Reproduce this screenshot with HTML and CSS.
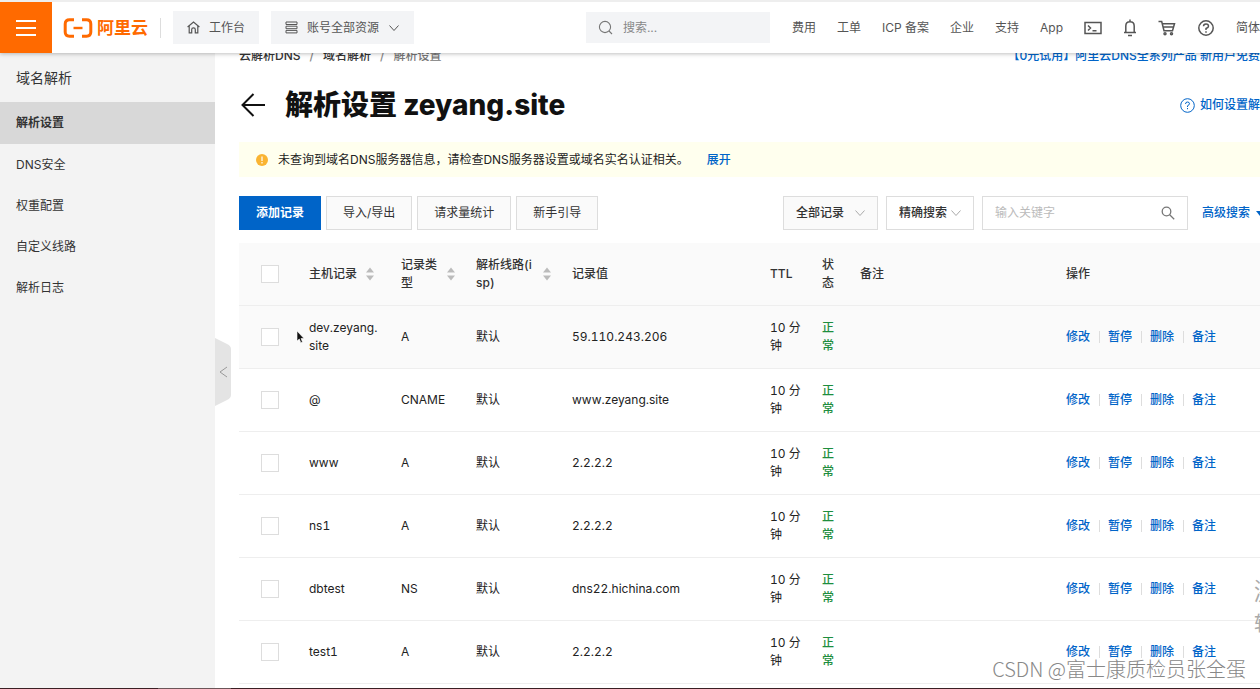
FILE: index.html
```
<!doctype html>
<html lang="zh-CN">
<head>
    <meta charset="UTF-8">
    <meta name="viewport" content="width=device-width, initial-scale=1.0">
    <title>解析设置 zeyang.site</title>
    <link rel="stylesheet" href="styles.css">
</head>
<body>
<svg class="defs" aria-hidden="true">
    <symbol id="sort" viewBox="0 0 10 14">
        <path d="M5 0.5 9 5.5H1zM5 13.5 9 8.5H1z" fill="#bbb"/>
    </symbol>
    <symbol id="down" viewBox="0 0 12 12">
        <path d="M1.5 3.5 6 8.5l4.5-5" fill="none" stroke="currentColor"/>
    </symbol>
</svg>

<header class="topbar">
    <button class="menu-btn" aria-label="菜单">
        <svg width="22" height="18" viewBox="0 0 22 18"><path d="M1 2h20M1 9h20M1 16h20" stroke="#fff" stroke-width="2"/></svg>
    </button>
    <a class="logo" href="#">
        <svg width="30" height="20" viewBox="0 0 30 20">
            <path d="M11 1.8H6.5Q2.2 1.8 2.2 6v8q0 4.2 4.3 4.2H11M19 1.8h4.5q4.3 0 4.3 4.2v8q0 4.2-4.3 4.2H19" fill="none" stroke="#ff6a00" stroke-width="3"/>
            <path d="M10.5 10h9" stroke="#ff6a00" stroke-width="2.4"/>
        </svg>
        <span>阿里云</span>
    </a>
    <button class="top-btn">
        <svg width="13" height="13" viewBox="0 0 13 13" fill="none" stroke="currentColor" stroke-width="1.2"><path d="M.6 6 6.5 1l5.9 5M2.2 5v6.8h2.5V8.5q0-1.6 1.8-1.6t1.8 1.6v3.3h2.5V5"/></svg>
        工作台
    </button>
    <button class="top-btn">
        <svg width="13" height="13" viewBox="0 0 13 13" fill="none" stroke="currentColor"><path d="M1 1h11v2.5H1zM1 5.2h11v2.5H1zM1 9.4h11v2.5H1z"/></svg>
        账号全部资源
        <svg class="caret" width="12" height="12"><use href="#down"/></svg>
    </button>
    <label class="top-search">
        <svg width="15" height="15" viewBox="0 0 15 15" fill="none" stroke="#777" stroke-width="1.1"><circle cx="7" cy="7" r="5.6"/><path d="m11 11 3 3"/></svg>
        <input type="text" placeholder="搜索..." aria-label="搜索">
    </label>
    <nav class="top-nav">
        <a href="#">费用</a>
        <a href="#">工单</a>
        <a href="#">ICP 备案</a>
        <a href="#">企业</a>
        <a href="#">支持</a>
        <a href="#">App</a>
        <a href="#" aria-label="终端"><svg width="18" height="14" viewBox="0 0 18 14" fill="none" stroke="currentColor" stroke-width="1.5"><path d="M1 1.5h16v11H1zM4 4.5 6.5 7 4 9.5M8.5 9.8h4"/></svg></a>
        <a href="#" aria-label="消息"><svg width="14" height="18" viewBox="0 0 14 18" fill="none" stroke="currentColor" stroke-width="1.5"><path d="M7 .5v2M1 13.5h12M2.8 13.5V7q0-4.2 4.2-4.2T11.2 7v6.5M5 16.5h4"/></svg></a>
        <a href="#" aria-label="购物车"><svg width="18" height="16" viewBox="0 0 18 16" fill="none" stroke="currentColor" stroke-width="1.5"><path d="M.5 1.5h3.2l2.3 9.3h8.5l2-7H4.5M5.3 7h10"/><circle cx="7" cy="13.8" r="1"/><circle cx="13.5" cy="13.8" r="1"/></svg></a>
        <a href="#" aria-label="帮助"><svg width="18" height="18" viewBox="0 0 18 18" fill="none" stroke="currentColor" stroke-width="1.5"><circle cx="9" cy="9" r="7.2"/><path d="M6.5 7.3Q6.5 5 9 5t2.5 2.2Q11.5 8.5 9 9.5V11M9 12.2v1.5"/></svg></a>
        <a href="#">简体</a>
    </nav>
</header>

<div class="layout">
    <aside class="sidebar">
        <h2>域名解析</h2>
        <ul>
            <li class="active"><a href="#">解析设置</a></li>
            <li><a href="#">DNS安全</a></li>
            <li><a href="#">权重配置</a></li>
            <li><a href="#">自定义线路</a></li>
            <li><a href="#">解析日志</a></li>
        </ul>
        <button class="fold" aria-label="收起">
            <svg width="16" height="68" viewBox="0 0 16 68"><path d="M0 0 12 6q4 2 4 5v46q0 3-4 5L0 68z" fill="#e4e4e4"/><path d="m12 29-7 5 7 5" fill="none" stroke="#999"/></svg>
        </button>
    </aside>

    <main class="main">
        <div class="crumb">
            <a href="#">云解析DNS</a><i>/</i><a href="#">域名解析</a><i>/</i><span>解析设置</span>
            <a class="link promo" href="#">【0元试用】阿里云DNS全系列产品 新用户免费</a>
        </div>
        <div class="title">
            <a href="#" aria-label="返回"><svg width="26" height="24" viewBox="0 0 26 24" fill="none" stroke="#111" stroke-width="2"><path d="M26 12H4M14.5 1 3.500 12l11 11"/></svg></a>
            <h1>解析设置 zeyang.site</h1>
            <a class="link help" href="#">
                <svg width="15" height="15" viewBox="0 0 15 15" fill="none" stroke="currentColor"><circle cx="7.5" cy="7.5" r="6.8"/><path d="M5.5 6q0-2 2-2t2 1.8q0 1-2 2V9M7.5 10v1.2"/></svg>
                如何设置解
            </a>
        </div>
        <div class="notice">
            <svg width="12" height="12" viewBox="0 0 12 12"><circle cx="6" cy="6" r="6" fill="#fab432"/><path d="M6 2.5v4.5M6 8v1.5" stroke="#fff" stroke-width="1.2"/></svg>
            <span>未查询到域名DNS服务器信息，请检查DNS服务器设置或域名实名认证相关。</span>
            <a class="link" href="#">展开</a>
        </div>
        <div class="toolbar">
            <button class="btn primary">添加记录</button>
            <button class="btn">导入/导出</button>
            <button class="btn">请求量统计</button>
            <button class="btn">新手引导</button>
            <div class="filter">
                <div class="select gray">
                    <select aria-label="记录范围"><option>全部记录</option></select>
                    <svg width="12" height="12"><use href="#down"/></svg>
                </div>
                <div class="select">
                    <select aria-label="搜索方式"><option>精确搜索</option></select>
                    <svg width="12" height="12"><use href="#down"/></svg>
                </div>
                <label class="keyword">
                    <input type="text" placeholder="输入关键字" aria-label="关键字">
                    <svg width="14" height="14" viewBox="0 0 14 14" fill="none" stroke="#777" stroke-width="1.3"><circle cx="5.5" cy="5.5" r="4.3"/><path d="m8.7 8.7 4.5 4.5"/></svg>
                </label>
                <a class="link more" href="#">高级搜索 <svg width="4" height="5" viewBox="0 0 4 5"><path d="M0 0h8L4 5z" fill="currentColor"/></svg></a>
            </div>
        </div>

        <table class="records">
            <colgroup>
                <col class="c-check"><col class="c-host"><col class="c-type"><col class="c-isp"><col class="c-value">
                <col class="c-ttl"><col class="c-status"><col class="c-remark"><col>
            </colgroup>
            <thead>
            <tr>
                <th class="check"><input type="checkbox" aria-label="全选"></th>
                <th><div class="sort">主机记录<button aria-label="排序"><svg width="10" height="14"><use href="#sort"/></svg></button></div></th>
                <th><div class="sort">记录类型<button aria-label="排序"><svg width="10" height="14"><use href="#sort"/></svg></button></div></th>
                <th><div class="sort">解析线路(isp)<button aria-label="排序"><svg width="10" height="14"><use href="#sort"/></svg></button></div></th>
                <th>记录值</th>
                <th>TTL</th>
                <th>状态</th>
                <th>备注</th>
                <th>操作</th>
            </tr>
            </thead>
            <tbody>
            <tr class="hover">
                <td class="check"><input type="checkbox" aria-label="dev.zeyang.site"></td>
                <td>dev.zeyang.site</td><td>A</td><td>默认</td><td>59.110.243.206</td><td>10 分钟</td><td class="ok">正常</td><td></td>
                <td><div class="ops"><a href="#">修改</a><a href="#">暂停</a><a href="#">删除</a><a href="#">备注</a></div></td>
            </tr>
            <tr>
                <td class="check"><input type="checkbox" aria-label="@"></td>
                <td>@</td><td>CNAME</td><td>默认</td><td>www.zeyang.site</td><td>10 分钟</td><td class="ok">正常</td><td></td>
                <td><div class="ops"><a href="#">修改</a><a href="#">暂停</a><a href="#">删除</a><a href="#">备注</a></div></td>
            </tr>
            <tr>
                <td class="check"><input type="checkbox" aria-label="www"></td>
                <td>www</td><td>A</td><td>默认</td><td>2.2.2.2</td><td>10 分钟</td><td class="ok">正常</td><td></td>
                <td><div class="ops"><a href="#">修改</a><a href="#">暂停</a><a href="#">删除</a><a href="#">备注</a></div></td>
            </tr>
            <tr>
                <td class="check"><input type="checkbox" aria-label="ns1"></td>
                <td>ns1</td><td>A</td><td>默认</td><td>2.2.2.2</td><td>10 分钟</td><td class="ok">正常</td><td></td>
                <td><div class="ops"><a href="#">修改</a><a href="#">暂停</a><a href="#">删除</a><a href="#">备注</a></div></td>
            </tr>
            <tr>
                <td class="check"><input type="checkbox" aria-label="dbtest"></td>
                <td>dbtest</td><td>NS</td><td>默认</td><td>dns22.hichina.com</td><td>10 分钟</td><td class="ok">正常</td><td></td>
                <td><div class="ops"><a href="#">修改</a><a href="#">暂停</a><a href="#">删除</a><a href="#">备注</a></div></td>
            </tr>
            <tr>
                <td class="check"><input type="checkbox" aria-label="test1"></td>
                <td>test1</td><td>A</td><td>默认</td><td>2.2.2.2</td><td>10 分钟</td><td class="ok">正常</td><td></td>
                <td><div class="ops"><a href="#">修改</a><a href="#">暂停</a><a href="#">删除</a><a href="#">备注</a></div></td>
            </tr>
            </tbody>
        </table>
    </main>
</div>
<div class="taskbar"><span></span></div>

<svg class="cursor" width="9" height="14" viewBox="0 0 9 14" aria-hidden="true"><path d="M1 1v10l2.3-2 1.5 3.7 1.7-.7L5 8.5h3z" fill="#111" stroke="#fff" stroke-width=".6"/></svg>
<div class="activate"><p>激活</p><p>转到</p></div>
<div class="watermark">CSDN @富士康质检员张全蛋</div>
</body>
</html>
```
FILE: styles.css
```
* {
    margin: 0;
    padding: 0;
    box-sizing: border-box;
}

html, body {
    height: 100%;
}

body {
    position: relative;
    display: flex;
    flex-direction: column;
    overflow: hidden;
    background: #fff;
    color: #333;
    font: 12px/18px Inter, "Noto Sans CJK SC", sans-serif;
}

button, input, select {
    font: inherit;
    color: inherit;
    border: 0;
    background: none;
    outline: none;
}

a {
    color: inherit;
    text-decoration: none;
}

ul {
    list-style: none;
}

svg {
    flex: none;
}

.defs {
    position: absolute;
    width: 0;
    height: 0;
}

/* 顶部导航 */
.topbar {
    position: relative;
    z-index: 2;
    flex: none;
    display: flex;
    align-items: center;
    height: 53px;
    border-top: 2px solid #eee;
    background: #fff;
    box-shadow: 0 1px 4px rgba(0, 0, 0, 0.25);
    color: #555;
    white-space: nowrap;
}

.menu-btn {
    display: flex;
    align-items: center;
    justify-content: center;
    width: 52px;
    height: 100%;
    background: #ff6a00;
}

.logo {
    display: flex;
    align-items: center;
    gap: 4px;
    padding: 0 12px 0 11px;
    margin-right: 12px;
    border-right: 1px solid #ddd;
    color: #ff6a00;
    font-size: 17px;
    font-weight: bold;
}

.top-btn {
    display: flex;
    align-items: center;
    gap: 9px;
    height: 33px;
    padding: 0 14px;
    margin-right: 12px;
    background: #f3f4f6;
}

.top-search {
    display: flex;
    align-items: center;
    gap: 10px;
    width: 184px;
    height: 31px;
    padding: 0 12px;
    margin-left: auto;
    margin-right: 22px;
    background: #f3f4f6;
}

.top-search input {
    width: 100%;
}

.top-search input::placeholder {
    color: #888;
}

.top-nav {
    display: flex;
    align-items: center;
    gap: 21px;
}

.top-nav svg {
    display: block;
}

.layout {
    flex: 1;
    display: flex;
    min-height: 0;
}

/* 侧边栏 */
.sidebar {
    position: relative;
    flex: none;
    width: 215px;
    background: #f3f3f3;
}

.sidebar h2 {
    padding-left: 16px;
    font-size: 14px;
    font-weight: normal;
    line-height: 49px;
}

.sidebar li {
    padding-left: 16px;
    line-height: 41px;
}

.sidebar .active {
    background: #d8d8d8;
    font-weight: 600;
    line-height: 42px;
}

.fold {
    position: absolute;
    top: 285px;
    left: 100%;
}

.fold svg {
    display: block;
}

/* 内容区, 面包屑滚动到导航下面 */
.main {
    flex: 1;
    min-width: 0;
    margin-top: -6px;
    padding-left: 24px;
}

.link {
    color: #0064c8;
    font-weight: 500;
    white-space: nowrap;
}

.crumb {
    display: flex;
    height: 18px;
    font-weight: 500;
}

.crumb i {
    margin: 0 9px;
    font-style: normal;
    color: #888;
}

.crumb span {
    color: #777;
}

.promo, .help {
    margin-left: auto;
}

.title {
    display: flex;
    align-items: center;
    padding: 20px 0;
}

.title h1 {
    margin-left: 20px;
    color: #111;
    font-size: 28px;
    font-weight: 800;
    line-height: 40px;
}

.title a {
    display: flex;
    align-items: center;
    gap: 5px;
}

.notice {
    display: flex;
    align-items: center;
    height: 35px;
    padding-left: 17px;
    margin: -3px 0 19px;
    background: #ffffee;
    color: #222;
}

.notice span {
    margin: 0 18px 0 10px;
}

.toolbar {
    display: flex;
    align-items: center;
    gap: 5px;
    margin-bottom: 13px;
    white-space: nowrap;
}

.btn {
    height: 34px;
    padding: 0 16px;
    border: 1px solid #ddd;
    background: #fafafa;
}

.btn.primary {
    border-color: #0064c8;
    background: #0064c8;
    color: #fff;
    font-weight: 600;
}

.filter {
    display: flex;
    align-items: center;
    gap: 8px;
    margin-left: auto;
}

.select {
    position: relative;
    width: 88px;
}

.select.gray {
    width: 95px;
    background: #fafafa;
}

.select select {
    appearance: none;
    width: 100%;
    height: 34px;
    padding-left: 12px;
    border: 1px solid #ddd;
    font-weight: 500;
}

.select svg {
    position: absolute;
    top: 11px;
    right: 12px;
    color: #aaa;
}

.keyword {
    display: flex;
    align-items: center;
    width: 206px;
    height: 34px;
    padding: 0 12px;
    border: 1px solid #ddd;
}

.keyword input {
    flex: 1;
    min-width: 0;
}

.keyword input::placeholder {
    color: #bbb;
}

.more {
    display: flex;
    align-items: center;
    gap: 6px;
    margin-left: 6px;
}

/* 解析记录 */
.records {
    width: 100%;
    table-layout: fixed;
    border-spacing: 0;
    font-variant-numeric: tabular-nums;
}

.c-check { width: 54px; }
.c-host { width: 92px; }
.c-type { width: 75px; }
.c-isp { width: 96px; }
.c-value { width: 198px; }
.c-ttl { width: 52px; }
.c-status { width: 38px; }
.c-remark { width: 206px; }

.records th, .records td {
    height: 63px;
    padding: 0 4px 0 16px;
    border-bottom: 1px solid #eee;
    text-align: left;
    word-break: break-all;
}

.records th {
    background: #fafafa;
    font-weight: 500;
}

.records td {
    color: #222;
}

.records .check {
    padding-left: 22px;
}

.records .hover td {
    background: #fafafa;
}

.records .ok {
    color: #1e8e3e;
    font-weight: 500;
}

.check input {
    appearance: none;
    display: block;
    width: 18px;
    height: 18px;
    border: 1px solid #ddd;
    background: #fff;
}

.sort {
    display: flex;
    align-items: center;
    gap: 8px;
}

.sort svg {
    display: block;
}

.ops {
    display: flex;
    align-items: center;
    white-space: nowrap;
    color: #0064c8;
    font-weight: 500;
}

.ops a {
    line-height: 12px;
}

.ops a + a {
    margin-left: 9px;
    padding-left: 8px;
    border-left: 1px solid #ddd;
}

.taskbar {
    position: relative;
    z-index: 2;
    flex: none;
    height: 1px;
    padding-left: 158px;
    background: #3a1f24;
}

.taskbar span {
    display: block;
    width: 73px;
    height: 1px;
    background: #6b5558;
}

.cursor {
    position: absolute;
    top: 330px;
    left: 296px;
}

/* 右下角水印 */
.activate {
    position: absolute;
    top: 576px;
    right: 0;
    width: 6px;
    overflow: hidden;
    color: #aaa;
    font-size: 24px;
    line-height: 32px;
    white-space: nowrap;
}

.activate p + p {
    font-size: 20px;
}

.watermark {
    position: absolute;
    right: 14px;
    bottom: 6px;
    color: #888;
    font: 20px/28px "Noto Sans CJK SC", sans-serif;
    font-weight: 300;
    text-shadow: 0 0 2px #fff;
}
```
